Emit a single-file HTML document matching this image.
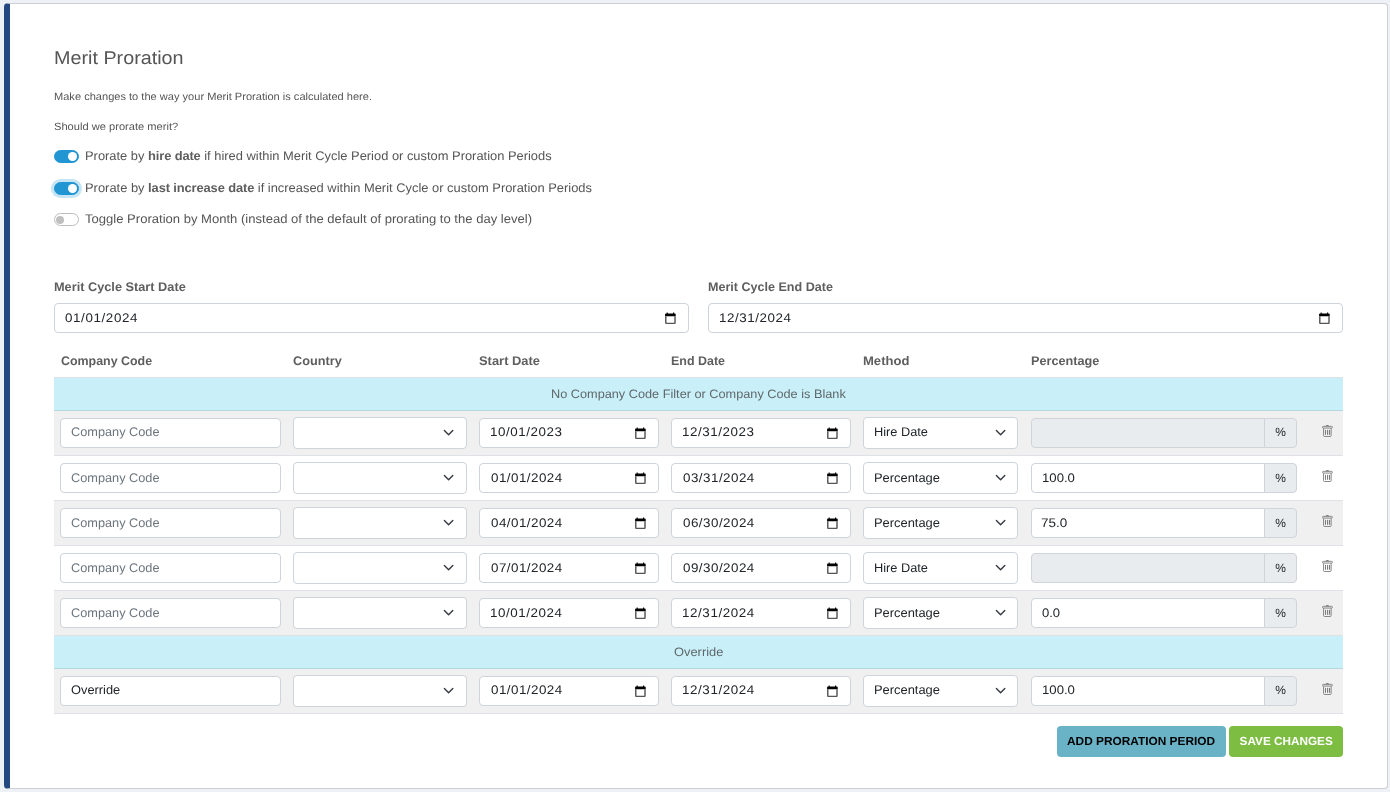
<!DOCTYPE html>
<html lang="en"><head><meta charset="utf-8"><title>Merit Proration</title>
<style>
*{box-sizing:border-box;margin:0;padding:0}
html,body{width:1390px;height:792px;overflow:hidden}
body{background:#eef1f6;font-family:"Liberation Sans",sans-serif;position:relative;color:#555}
.card{position:absolute;left:4px;top:3px;width:1384px;height:786px;background:#fff;border:1px solid #cdcfd2;border-left:6px solid #244882;border-radius:4px}
.t,.box,.cal,.chev,.trash,.row,.sw,.btn{position:absolute}
#txt{position:absolute;left:0;top:0;width:1390px;height:792px;will-change:transform}
.t{white-space:nowrap;line-height:1;text-rendering:geometricPrecision;font-family:"Liberation Sans",sans-serif;display:inline-block;transform-origin:0 0}
.t b{font-weight:700;color:#5e5e5e;letter-spacing:-.12px}
.box{background:#fff;border:1px solid #ced4da;border-radius:4px}
.dis{background:#e9ecef}
.row{left:54px;width:1289px}
.grey{background:#f0f0f0}
.cyan{background:#c9f0f9}
.bb{border-bottom:1px solid #dee2e6}
.cb{border-bottom:1px solid #b4d8e0}
.sw{width:25px;height:13px;border-radius:13px}
.sw::after{content:"";position:absolute;border-radius:50%}
.sw.on{background:#2196d3;border:1px solid #2196d3}
.sw.on::after{right:.8px;top:.9px;width:9.2px;height:9.2px;background:#fff}
.sw.off{background:#fff;border:1px solid #bdbdbd}
.sw.off::after{left:.9px;top:1.6px;width:8px;height:8px;background:#bfbfbf}
.sw.focus{box-shadow:0 0 0 3px rgba(33,150,211,.25)}
.btn{border-radius:4px}
</style></head><body>
<div class="card"></div>
<div class="sw on" style="left:54px;top:150px"></div>
<div class="sw on focus" style="left:54px;top:182px"></div>
<div class="sw off" style="left:54px;top:213px"></div>
<div class="box" style="left:54px;top:303px;width:635px;height:30px"></div>
<div class="box" style="left:708px;top:303px;width:635px;height:30px"></div>
<svg class="cal" style="left:664.3px;top:311.7px" width="12.8" height="12.6" viewBox="0 0 24 24" preserveAspectRatio="none"><path fill="#000" d="M20 3h-1V1h-2v2H7V1H5v2H4c-1.1 0-2 .9-2 2v3h20V5c0-1.1-.9-2-2-2z"/><path fill="#555" d="M2 8v13c0 1.1.9 2 2 2h16c1.1 0 2-.9 2-2V8h-2.7v12.3H4.7V8z"/></svg>
<svg class="cal" style="left:1318.2px;top:311.7px" width="12.8" height="12.6" viewBox="0 0 24 24" preserveAspectRatio="none"><path fill="#000" d="M20 3h-1V1h-2v2H7V1H5v2H4c-1.1 0-2 .9-2 2v3h20V5c0-1.1-.9-2-2-2z"/><path fill="#555" d="M2 8v13c0 1.1.9 2 2 2h16c1.1 0 2-.9 2-2V8h-2.7v12.3H4.7V8z"/></svg>
<div class="row bb" style="top:344px;height:34px"></div>
<div class="row cyan cb" style="top:378px;height:33px"></div>
<div class="row cyan cb" style="top:636px;height:33px"></div>
<div class="row bb grey" style="top:411px;height:45px"></div>
<div class="box" style="left:60px;top:418px;width:221px;height:30px"></div><div class="box" style="left:293px;top:417px;width:174px;height:32px"></div><svg class="chev" style="left:443.4px;top:426.8px" width="11.2" height="11.2" viewBox="0 0 16 16"><path fill="none" stroke="#343a40" stroke-linecap="round" stroke-linejoin="round" stroke-width="2" d="M2 5l6 6 6-6"/></svg><div class="box" style="left:479px;top:418px;width:180px;height:30px"></div><svg class="cal" style="left:634.1px;top:426.65px" width="12.8" height="12.6" viewBox="0 0 24 24" preserveAspectRatio="none"><path fill="#000" d="M20 3h-1V1h-2v2H7V1H5v2H4c-1.1 0-2 .9-2 2v3h20V5c0-1.1-.9-2-2-2z"/><path fill="#555" d="M2 8v13c0 1.1.9 2 2 2h16c1.1 0 2-.9 2-2V8h-2.7v12.3H4.7V8z"/></svg><div class="box" style="left:671px;top:418px;width:180px;height:30px"></div><svg class="cal" style="left:826.0px;top:426.65px" width="12.8" height="12.6" viewBox="0 0 24 24" preserveAspectRatio="none"><path fill="#000" d="M20 3h-1V1h-2v2H7V1H5v2H4c-1.1 0-2 .9-2 2v3h20V5c0-1.1-.9-2-2-2z"/><path fill="#555" d="M2 8v13c0 1.1.9 2 2 2h16c1.1 0 2-.9 2-2V8h-2.7v12.3H4.7V8z"/></svg><div class="box" style="left:863px;top:417px;width:155px;height:32px"></div><svg class="chev" style="left:995.4px;top:426.8px" width="11.2" height="11.2" viewBox="0 0 16 16"><path fill="none" stroke="#343a40" stroke-linecap="round" stroke-linejoin="round" stroke-width="2" d="M2 5l6 6 6-6"/></svg><div class="box dis" style="left:1031px;top:418px;width:234px;height:30px;border-radius:4px 0 0 4px"></div><div class="box dis" style="left:1264px;top:418px;width:33px;height:30px;border-radius:0 4px 4px 0"></div><svg class="trash" style="left:1322px;top:425.1px" width="11" height="12" viewBox="0 0 11 12"><g fill="none" stroke="#7d7d7d" stroke-width="0.9"><path d="M4.1 1.1q1.3-1.1 2.6 0" stroke-width="1.1"/><rect x="0.45" y="1.35" width="10" height="1.7" rx="0.85"/><path d="M1.55 3.2v7.3q0 1 1 1h5.6q1 0 1-1V3.2"/><path d="M3.5 4.9v4.9M5.5 4.9v4.9" stroke-width="1"/><path d="M7.5 4.9v4.9" stroke-width="1.25"/></g></svg>
<div class="row bb" style="top:456px;height:45px"></div>
<div class="box" style="left:60px;top:463px;width:221px;height:30px"></div><div class="box" style="left:293px;top:462px;width:174px;height:32px"></div><svg class="chev" style="left:443.4px;top:471.8px" width="11.2" height="11.2" viewBox="0 0 16 16"><path fill="none" stroke="#343a40" stroke-linecap="round" stroke-linejoin="round" stroke-width="2" d="M2 5l6 6 6-6"/></svg><div class="box" style="left:479px;top:463px;width:180px;height:30px"></div><svg class="cal" style="left:634.1px;top:471.65px" width="12.8" height="12.6" viewBox="0 0 24 24" preserveAspectRatio="none"><path fill="#000" d="M20 3h-1V1h-2v2H7V1H5v2H4c-1.1 0-2 .9-2 2v3h20V5c0-1.1-.9-2-2-2z"/><path fill="#555" d="M2 8v13c0 1.1.9 2 2 2h16c1.1 0 2-.9 2-2V8h-2.7v12.3H4.7V8z"/></svg><div class="box" style="left:671px;top:463px;width:180px;height:30px"></div><svg class="cal" style="left:826.0px;top:471.65px" width="12.8" height="12.6" viewBox="0 0 24 24" preserveAspectRatio="none"><path fill="#000" d="M20 3h-1V1h-2v2H7V1H5v2H4c-1.1 0-2 .9-2 2v3h20V5c0-1.1-.9-2-2-2z"/><path fill="#555" d="M2 8v13c0 1.1.9 2 2 2h16c1.1 0 2-.9 2-2V8h-2.7v12.3H4.7V8z"/></svg><div class="box" style="left:863px;top:462px;width:155px;height:32px"></div><svg class="chev" style="left:995.4px;top:471.8px" width="11.2" height="11.2" viewBox="0 0 16 16"><path fill="none" stroke="#343a40" stroke-linecap="round" stroke-linejoin="round" stroke-width="2" d="M2 5l6 6 6-6"/></svg><div class="box" style="left:1031px;top:463px;width:234px;height:30px;border-radius:4px 0 0 4px"></div><div class="box dis" style="left:1264px;top:463px;width:33px;height:30px;border-radius:0 4px 4px 0"></div><svg class="trash" style="left:1322px;top:470.1px" width="11" height="12" viewBox="0 0 11 12"><g fill="none" stroke="#7d7d7d" stroke-width="0.9"><path d="M4.1 1.1q1.3-1.1 2.6 0" stroke-width="1.1"/><rect x="0.45" y="1.35" width="10" height="1.7" rx="0.85"/><path d="M1.55 3.2v7.3q0 1 1 1h5.6q1 0 1-1V3.2"/><path d="M3.5 4.9v4.9M5.5 4.9v4.9" stroke-width="1"/><path d="M7.5 4.9v4.9" stroke-width="1.25"/></g></svg>
<div class="row bb grey" style="top:501px;height:45px"></div>
<div class="box" style="left:60px;top:508px;width:221px;height:30px"></div><div class="box" style="left:293px;top:507px;width:174px;height:32px"></div><svg class="chev" style="left:443.4px;top:516.8px" width="11.2" height="11.2" viewBox="0 0 16 16"><path fill="none" stroke="#343a40" stroke-linecap="round" stroke-linejoin="round" stroke-width="2" d="M2 5l6 6 6-6"/></svg><div class="box" style="left:479px;top:508px;width:180px;height:30px"></div><svg class="cal" style="left:634.1px;top:516.65px" width="12.8" height="12.6" viewBox="0 0 24 24" preserveAspectRatio="none"><path fill="#000" d="M20 3h-1V1h-2v2H7V1H5v2H4c-1.1 0-2 .9-2 2v3h20V5c0-1.1-.9-2-2-2z"/><path fill="#555" d="M2 8v13c0 1.1.9 2 2 2h16c1.1 0 2-.9 2-2V8h-2.7v12.3H4.7V8z"/></svg><div class="box" style="left:671px;top:508px;width:180px;height:30px"></div><svg class="cal" style="left:826.0px;top:516.65px" width="12.8" height="12.6" viewBox="0 0 24 24" preserveAspectRatio="none"><path fill="#000" d="M20 3h-1V1h-2v2H7V1H5v2H4c-1.1 0-2 .9-2 2v3h20V5c0-1.1-.9-2-2-2z"/><path fill="#555" d="M2 8v13c0 1.1.9 2 2 2h16c1.1 0 2-.9 2-2V8h-2.7v12.3H4.7V8z"/></svg><div class="box" style="left:863px;top:507px;width:155px;height:32px"></div><svg class="chev" style="left:995.4px;top:516.8px" width="11.2" height="11.2" viewBox="0 0 16 16"><path fill="none" stroke="#343a40" stroke-linecap="round" stroke-linejoin="round" stroke-width="2" d="M2 5l6 6 6-6"/></svg><div class="box" style="left:1031px;top:508px;width:234px;height:30px;border-radius:4px 0 0 4px"></div><div class="box dis" style="left:1264px;top:508px;width:33px;height:30px;border-radius:0 4px 4px 0"></div><svg class="trash" style="left:1322px;top:515.1px" width="11" height="12" viewBox="0 0 11 12"><g fill="none" stroke="#7d7d7d" stroke-width="0.9"><path d="M4.1 1.1q1.3-1.1 2.6 0" stroke-width="1.1"/><rect x="0.45" y="1.35" width="10" height="1.7" rx="0.85"/><path d="M1.55 3.2v7.3q0 1 1 1h5.6q1 0 1-1V3.2"/><path d="M3.5 4.9v4.9M5.5 4.9v4.9" stroke-width="1"/><path d="M7.5 4.9v4.9" stroke-width="1.25"/></g></svg>
<div class="row bb" style="top:546px;height:45px"></div>
<div class="box" style="left:60px;top:553px;width:221px;height:30px"></div><div class="box" style="left:293px;top:552px;width:174px;height:32px"></div><svg class="chev" style="left:443.4px;top:561.8px" width="11.2" height="11.2" viewBox="0 0 16 16"><path fill="none" stroke="#343a40" stroke-linecap="round" stroke-linejoin="round" stroke-width="2" d="M2 5l6 6 6-6"/></svg><div class="box" style="left:479px;top:553px;width:180px;height:30px"></div><svg class="cal" style="left:634.1px;top:561.65px" width="12.8" height="12.6" viewBox="0 0 24 24" preserveAspectRatio="none"><path fill="#000" d="M20 3h-1V1h-2v2H7V1H5v2H4c-1.1 0-2 .9-2 2v3h20V5c0-1.1-.9-2-2-2z"/><path fill="#555" d="M2 8v13c0 1.1.9 2 2 2h16c1.1 0 2-.9 2-2V8h-2.7v12.3H4.7V8z"/></svg><div class="box" style="left:671px;top:553px;width:180px;height:30px"></div><svg class="cal" style="left:826.0px;top:561.65px" width="12.8" height="12.6" viewBox="0 0 24 24" preserveAspectRatio="none"><path fill="#000" d="M20 3h-1V1h-2v2H7V1H5v2H4c-1.1 0-2 .9-2 2v3h20V5c0-1.1-.9-2-2-2z"/><path fill="#555" d="M2 8v13c0 1.1.9 2 2 2h16c1.1 0 2-.9 2-2V8h-2.7v12.3H4.7V8z"/></svg><div class="box" style="left:863px;top:552px;width:155px;height:32px"></div><svg class="chev" style="left:995.4px;top:561.8px" width="11.2" height="11.2" viewBox="0 0 16 16"><path fill="none" stroke="#343a40" stroke-linecap="round" stroke-linejoin="round" stroke-width="2" d="M2 5l6 6 6-6"/></svg><div class="box dis" style="left:1031px;top:553px;width:234px;height:30px;border-radius:4px 0 0 4px"></div><div class="box dis" style="left:1264px;top:553px;width:33px;height:30px;border-radius:0 4px 4px 0"></div><svg class="trash" style="left:1322px;top:560.1px" width="11" height="12" viewBox="0 0 11 12"><g fill="none" stroke="#7d7d7d" stroke-width="0.9"><path d="M4.1 1.1q1.3-1.1 2.6 0" stroke-width="1.1"/><rect x="0.45" y="1.35" width="10" height="1.7" rx="0.85"/><path d="M1.55 3.2v7.3q0 1 1 1h5.6q1 0 1-1V3.2"/><path d="M3.5 4.9v4.9M5.5 4.9v4.9" stroke-width="1"/><path d="M7.5 4.9v4.9" stroke-width="1.25"/></g></svg>
<div class="row bb grey" style="top:591px;height:45px"></div>
<div class="box" style="left:60px;top:598px;width:221px;height:30px"></div><div class="box" style="left:293px;top:597px;width:174px;height:32px"></div><svg class="chev" style="left:443.4px;top:606.8px" width="11.2" height="11.2" viewBox="0 0 16 16"><path fill="none" stroke="#343a40" stroke-linecap="round" stroke-linejoin="round" stroke-width="2" d="M2 5l6 6 6-6"/></svg><div class="box" style="left:479px;top:598px;width:180px;height:30px"></div><svg class="cal" style="left:634.1px;top:606.65px" width="12.8" height="12.6" viewBox="0 0 24 24" preserveAspectRatio="none"><path fill="#000" d="M20 3h-1V1h-2v2H7V1H5v2H4c-1.1 0-2 .9-2 2v3h20V5c0-1.1-.9-2-2-2z"/><path fill="#555" d="M2 8v13c0 1.1.9 2 2 2h16c1.1 0 2-.9 2-2V8h-2.7v12.3H4.7V8z"/></svg><div class="box" style="left:671px;top:598px;width:180px;height:30px"></div><svg class="cal" style="left:826.0px;top:606.65px" width="12.8" height="12.6" viewBox="0 0 24 24" preserveAspectRatio="none"><path fill="#000" d="M20 3h-1V1h-2v2H7V1H5v2H4c-1.1 0-2 .9-2 2v3h20V5c0-1.1-.9-2-2-2z"/><path fill="#555" d="M2 8v13c0 1.1.9 2 2 2h16c1.1 0 2-.9 2-2V8h-2.7v12.3H4.7V8z"/></svg><div class="box" style="left:863px;top:597px;width:155px;height:32px"></div><svg class="chev" style="left:995.4px;top:606.8px" width="11.2" height="11.2" viewBox="0 0 16 16"><path fill="none" stroke="#343a40" stroke-linecap="round" stroke-linejoin="round" stroke-width="2" d="M2 5l6 6 6-6"/></svg><div class="box" style="left:1031px;top:598px;width:234px;height:30px;border-radius:4px 0 0 4px"></div><div class="box dis" style="left:1264px;top:598px;width:33px;height:30px;border-radius:0 4px 4px 0"></div><svg class="trash" style="left:1322px;top:605.1px" width="11" height="12" viewBox="0 0 11 12"><g fill="none" stroke="#7d7d7d" stroke-width="0.9"><path d="M4.1 1.1q1.3-1.1 2.6 0" stroke-width="1.1"/><rect x="0.45" y="1.35" width="10" height="1.7" rx="0.85"/><path d="M1.55 3.2v7.3q0 1 1 1h5.6q1 0 1-1V3.2"/><path d="M3.5 4.9v4.9M5.5 4.9v4.9" stroke-width="1"/><path d="M7.5 4.9v4.9" stroke-width="1.25"/></g></svg>
<div class="row bb grey" style="top:669px;height:45px"></div>
<div class="box" style="left:60px;top:676px;width:221px;height:30px"></div><div class="box" style="left:293px;top:675px;width:174px;height:32px"></div><svg class="chev" style="left:443.4px;top:684.8px" width="11.2" height="11.2" viewBox="0 0 16 16"><path fill="none" stroke="#343a40" stroke-linecap="round" stroke-linejoin="round" stroke-width="2" d="M2 5l6 6 6-6"/></svg><div class="box" style="left:479px;top:676px;width:180px;height:30px"></div><svg class="cal" style="left:634.1px;top:684.65px" width="12.8" height="12.6" viewBox="0 0 24 24" preserveAspectRatio="none"><path fill="#000" d="M20 3h-1V1h-2v2H7V1H5v2H4c-1.1 0-2 .9-2 2v3h20V5c0-1.1-.9-2-2-2z"/><path fill="#555" d="M2 8v13c0 1.1.9 2 2 2h16c1.1 0 2-.9 2-2V8h-2.7v12.3H4.7V8z"/></svg><div class="box" style="left:671px;top:676px;width:180px;height:30px"></div><svg class="cal" style="left:826.0px;top:684.65px" width="12.8" height="12.6" viewBox="0 0 24 24" preserveAspectRatio="none"><path fill="#000" d="M20 3h-1V1h-2v2H7V1H5v2H4c-1.1 0-2 .9-2 2v3h20V5c0-1.1-.9-2-2-2z"/><path fill="#555" d="M2 8v13c0 1.1.9 2 2 2h16c1.1 0 2-.9 2-2V8h-2.7v12.3H4.7V8z"/></svg><div class="box" style="left:863px;top:675px;width:155px;height:32px"></div><svg class="chev" style="left:995.4px;top:684.8px" width="11.2" height="11.2" viewBox="0 0 16 16"><path fill="none" stroke="#343a40" stroke-linecap="round" stroke-linejoin="round" stroke-width="2" d="M2 5l6 6 6-6"/></svg><div class="box" style="left:1031px;top:676px;width:234px;height:30px;border-radius:4px 0 0 4px"></div><div class="box dis" style="left:1264px;top:676px;width:33px;height:30px;border-radius:0 4px 4px 0"></div><svg class="trash" style="left:1322px;top:683.1px" width="11" height="12" viewBox="0 0 11 12"><g fill="none" stroke="#7d7d7d" stroke-width="0.9"><path d="M4.1 1.1q1.3-1.1 2.6 0" stroke-width="1.1"/><rect x="0.45" y="1.35" width="10" height="1.7" rx="0.85"/><path d="M1.55 3.2v7.3q0 1 1 1h5.6q1 0 1-1V3.2"/><path d="M3.5 4.9v4.9M5.5 4.9v4.9" stroke-width="1"/><path d="M7.5 4.9v4.9" stroke-width="1.25"/></g></svg>
<div class="btn" style="left:1057px;top:726px;width:169px;height:31px;background:#6ab3c7"></div>
<div class="btn" style="left:1229px;top:726px;width:114px;height:31px;background:#7dbd42"></div>
<div id="txt">
<span class="t" id="title" style="left:53.75px;top:49.00px;font-size:18.5px;font-weight:400;color:#555;transform:scaleX(1.0682);">Merit Proration</span>
<span class="t" id="sub1" style="left:54.30px;top:92.01px;font-size:10.5px;font-weight:400;color:#555;transform:scaleX(1.0539);">Make changes to the way your Merit Proration is calculated here.</span>
<span class="t" id="sub2" style="left:53.67px;top:122.15px;font-size:10.5px;font-weight:400;color:#555;transform:scaleX(1.0589);">Should we prorate merit?</span>
<span class="t" id="tg1" style="left:84.90px;top:149.98px;font-size:12.5px;font-weight:400;color:#555;transform:scaleX(1.0310);">Prorate by <b>hire date</b> if hired within Merit Cycle Period or custom Proration Periods</span>
<span class="t" id="tg2" style="left:84.90px;top:181.98px;font-size:12.5px;font-weight:400;color:#555;transform:scaleX(1.0323);">Prorate by <b>last increase date</b> if increased within Merit Cycle or custom Proration Periods</span>
<span class="t" id="tg3" style="left:84.94px;top:213.04px;font-size:12.5px;font-weight:400;color:#555;transform:scaleX(1.0443);">Toggle Proration by Month (instead of the default of prorating to the day level)</span>
<span class="t" id="lb1" style="left:54.31px;top:280.99px;font-size:12.5px;font-weight:700;color:#5e5e5e;transform:scaleX(1.0196);">Merit Cycle Start Date</span>
<span class="t" id="lb2" style="left:708.40px;top:280.99px;font-size:12.5px;font-weight:700;color:#5e5e5e;transform:scaleX(1.0045);">Merit Cycle End Date</span>
<span class="t" id="d1" style="left:64.89px;top:311.93px;font-size:12.5px;font-weight:400;color:#212529;letter-spacing:0.574px;transform:scaleX(1.0700);">01/01/2024</span>
<span class="t" id="d2" style="left:719.00px;top:311.93px;font-size:12.5px;font-weight:400;color:#212529;letter-spacing:0.532px;transform:scaleX(1.0700);">12/31/2024</span>
<span class="t" id="h1" style="left:60.75px;top:355.19px;font-size:12.5px;font-weight:700;color:#5e5e5e;transform:scaleX(0.9940);">Company Code</span>
<span class="t" id="h2" style="left:293.38px;top:355.19px;font-size:12.5px;font-weight:700;color:#5e5e5e;transform:scaleX(1.0171);">Country</span>
<span class="t" id="h3" style="left:479.39px;top:355.19px;font-size:12.5px;font-weight:700;color:#5e5e5e;transform:scaleX(1.0333);">Start Date</span>
<span class="t" id="h4" style="left:671.16px;top:355.19px;font-size:12.5px;font-weight:700;color:#5e5e5e;transform:scaleX(0.9965);">End Date</span>
<span class="t" id="h5" style="left:863.40px;top:355.19px;font-size:12.5px;font-weight:700;color:#5e5e5e;transform:scaleX(1.0444);">Method</span>
<span class="t" id="h6" style="left:1031.01px;top:355.19px;font-size:12.5px;font-weight:700;color:#5e5e5e;transform:scaleX(1.0153);">Percentage</span>
<span class="t" id="c1" style="left:551.14px;top:388.32px;font-size:12.25px;font-weight:400;color:#5f676a;transform:scaleX(1.0382);">No Company Code Filter or Company Code is Blank</span>
<span class="t" id="c2" style="left:673.81px;top:646.30px;font-size:12.25px;font-weight:400;color:#5f676a;transform:scaleX(1.0508);">Override</span>
<span class="t" id="r0cc" style="left:70.94px;top:426.14px;font-size:12.5px;font-weight:400;color:#6c757d;transform:scaleX(1.0194);">Company Code</span>
<span class="t" id="r0sd" style="left:490.20px;top:426.13px;font-size:12.5px;font-weight:400;color:#212529;letter-spacing:0.526px;transform:scaleX(1.0700);">10/01/2023</span>
<span class="t" id="r0ed" style="left:682.00px;top:426.13px;font-size:12.5px;font-weight:400;color:#212529;letter-spacing:0.516px;transform:scaleX(1.0700);">12/31/2023</span>
<span class="t" id="r0m" style="left:873.66px;top:426.32px;font-size:12.5px;font-weight:400;color:#212529;transform:scaleX(1.0225);">Hire Date</span>
<span class="t" id="r0pc" style="left:1275.14px;top:425.94px;font-size:12px;font-weight:400;color:#212529;transform:scaleX(1.0000);">%</span>
<span class="t" id="r1cc" style="left:70.94px;top:471.94px;font-size:12.5px;font-weight:400;color:#6c757d;transform:scaleX(1.0194);">Company Code</span>
<span class="t" id="r1sd" style="left:490.50px;top:471.93px;font-size:12.5px;font-weight:400;color:#212529;letter-spacing:0.443px;transform:scaleX(1.0700);">01/01/2024</span>
<span class="t" id="r1ed" style="left:682.50px;top:471.93px;font-size:12.5px;font-weight:400;color:#212529;letter-spacing:0.453px;transform:scaleX(1.0700);">03/31/2024</span>
<span class="t" id="r1m" style="left:873.58px;top:472.12px;font-size:12.5px;font-weight:400;color:#212529;transform:scaleX(1.0312);">Percentage</span>
<span class="t" id="r1p" style="left:1041.60px;top:471.94px;font-size:12.5px;font-weight:400;color:#212529;transform:scaleX(1.0519);">100.0</span>
<span class="t" id="r1pc" style="left:1275.14px;top:471.84px;font-size:12px;font-weight:400;color:#212529;transform:scaleX(1.0000);">%</span>
<span class="t" id="r2cc" style="left:70.94px;top:517.14px;font-size:12.5px;font-weight:400;color:#6c757d;transform:scaleX(1.0194);">Company Code</span>
<span class="t" id="r2sd" style="left:490.50px;top:517.13px;font-size:12.5px;font-weight:400;color:#212529;letter-spacing:0.443px;transform:scaleX(1.0700);">04/01/2024</span>
<span class="t" id="r2ed" style="left:682.50px;top:517.13px;font-size:12.5px;font-weight:400;color:#212529;letter-spacing:0.453px;transform:scaleX(1.0700);">06/30/2024</span>
<span class="t" id="r2m" style="left:873.58px;top:517.32px;font-size:12.5px;font-weight:400;color:#212529;transform:scaleX(1.0312);">Percentage</span>
<span class="t" id="r2p" style="left:1041.21px;top:517.14px;font-size:12.5px;font-weight:400;color:#212529;transform:scaleX(1.0785);">75.0</span>
<span class="t" id="r2pc" style="left:1275.14px;top:516.94px;font-size:12px;font-weight:400;color:#212529;transform:scaleX(1.0000);">%</span>
<span class="t" id="r3cc" style="left:70.94px;top:561.94px;font-size:12.5px;font-weight:400;color:#6c757d;transform:scaleX(1.0194);">Company Code</span>
<span class="t" id="r3sd" style="left:490.50px;top:561.93px;font-size:12.5px;font-weight:400;color:#212529;letter-spacing:0.443px;transform:scaleX(1.0700);">07/01/2024</span>
<span class="t" id="r3ed" style="left:682.50px;top:561.93px;font-size:12.5px;font-weight:400;color:#212529;letter-spacing:0.453px;transform:scaleX(1.0700);">09/30/2024</span>
<span class="t" id="r3m" style="left:873.66px;top:562.12px;font-size:12.5px;font-weight:400;color:#212529;transform:scaleX(1.0225);">Hire Date</span>
<span class="t" id="r3pc" style="left:1275.14px;top:561.84px;font-size:12px;font-weight:400;color:#212529;transform:scaleX(1.0000);">%</span>
<span class="t" id="r4cc" style="left:70.94px;top:607.14px;font-size:12.5px;font-weight:400;color:#6c757d;transform:scaleX(1.0194);">Company Code</span>
<span class="t" id="r4sd" style="left:490.32px;top:607.13px;font-size:12.5px;font-weight:400;color:#212529;letter-spacing:0.507px;transform:scaleX(1.0700);">10/01/2024</span>
<span class="t" id="r4ed" style="left:682.20px;top:607.13px;font-size:12.5px;font-weight:400;color:#212529;letter-spacing:0.555px;transform:scaleX(1.0700);">12/31/2024</span>
<span class="t" id="r4m" style="left:873.58px;top:607.32px;font-size:12.5px;font-weight:400;color:#212529;transform:scaleX(1.0312);">Percentage</span>
<span class="t" id="r4p" style="left:1042.18px;top:607.14px;font-size:12.5px;font-weight:400;color:#212529;transform:scaleX(1.0427);">0.0</span>
<span class="t" id="r4pc" style="left:1275.14px;top:606.94px;font-size:12px;font-weight:400;color:#212529;transform:scaleX(1.0000);">%</span>
<span class="t" id="r5cc" style="left:70.86px;top:684.14px;font-size:12.5px;font-weight:400;color:#212529;transform:scaleX(1.0257);">Override</span>
<span class="t" id="r5sd" style="left:490.50px;top:684.13px;font-size:12.5px;font-weight:400;color:#212529;letter-spacing:0.443px;transform:scaleX(1.0700);">01/01/2024</span>
<span class="t" id="r5ed" style="left:682.20px;top:684.13px;font-size:12.5px;font-weight:400;color:#212529;letter-spacing:0.555px;transform:scaleX(1.0700);">12/31/2024</span>
<span class="t" id="r5m" style="left:873.58px;top:684.32px;font-size:12.5px;font-weight:400;color:#212529;transform:scaleX(1.0312);">Percentage</span>
<span class="t" id="r5p" style="left:1041.60px;top:684.14px;font-size:12.5px;font-weight:400;color:#212529;transform:scaleX(1.0519);">100.0</span>
<span class="t" id="r5pc" style="left:1275.14px;top:683.94px;font-size:12px;font-weight:400;color:#212529;transform:scaleX(1.0000);">%</span>
<span class="t" id="b1" style="left:1067.07px;top:735.80px;font-size:11.75px;font-weight:700;color:#000;transform:scaleX(1.0093);">ADD PRORATION PERIOD</span>
<span class="t" id="b2" style="left:1239.60px;top:735.80px;font-size:11.75px;font-weight:700;color:#fff;transform:scaleX(1.0000);">SAVE CHANGES</span>
</div>
</body></html>
